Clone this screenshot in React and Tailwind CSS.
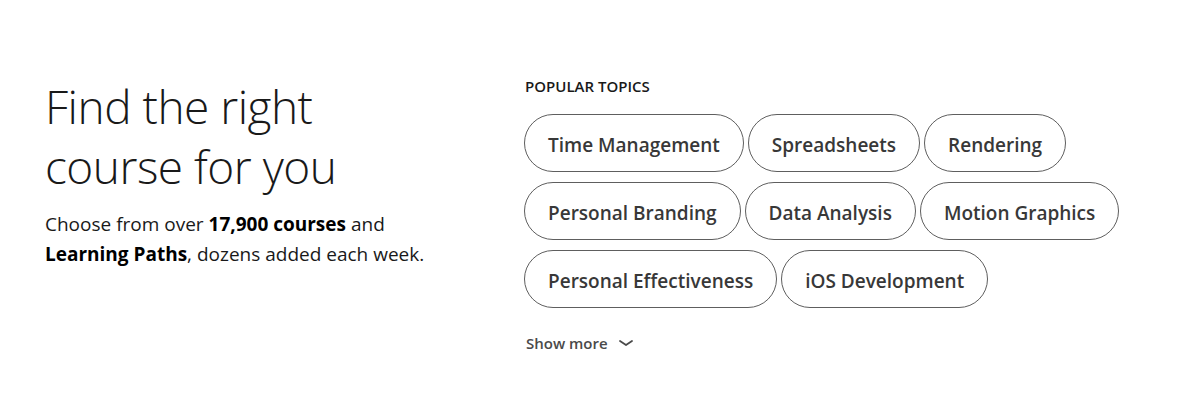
import React from "react";

const topics = [
  "Time Management",
  "Spreadsheets",
  "Rendering",
  "Personal Branding",
  "Data Analysis",
  "Motion Graphics",
  "Personal Effectiveness",
  "iOS Development",
];

export default function App() {
  return (
    <div
      className="w-[1197px] h-[402px] bg-white flex pl-[45px] pt-[76px]"
      style={{ fontFamily: '"Open Sans", "Noto Sans", sans-serif' }}
    >
      <div className="w-[480px] shrink-0">
        <h1 className="text-[46px] leading-[60px] font-light text-[#191919] tracking-[-0.5px]">
          Find the right
          <br />
          course for you
        </h1>
        <p className="mt-[13px] text-[19px] leading-[30px] text-[#191919]">
          Choose from over <b className="font-bold text-black">17,900 courses</b> and
          <br />
          <b className="font-bold text-black">Learning Paths</b>, dozens added each week.
        </p>
      </div>
      <div className="flex-1">
        <div className="text-[15px] leading-[20px] font-semibold text-[#191919]">
          POPULAR TOPICS
        </div>
        <div className="mt-[18px] flex flex-wrap gap-x-[4px] gap-y-[10px] w-[620px] -ml-[1px]">
          {topics.map((t) => (
            <div
              key={t}
              className="h-[58px] px-[23px] pt-[4px] flex items-center rounded-full border border-[#5e5e5e] text-[19px] font-semibold text-[#383838]"
            >
              {t}
            </div>
          ))}
        </div>
        <div className="mt-[24px] flex items-center gap-[10px] text-[15px] font-semibold text-[#4a4a4a] pl-[1px]">
          Show more
          <svg width="16" height="14" viewBox="0 0 16 14" fill="none">
            <path d="M2 5 L8 9 L14 5" stroke="#4a4a4a" strokeWidth="1.8" strokeLinecap="round" strokeLinejoin="round" />
          </svg>
        </div>
      </div>
    </div>
  );
}
